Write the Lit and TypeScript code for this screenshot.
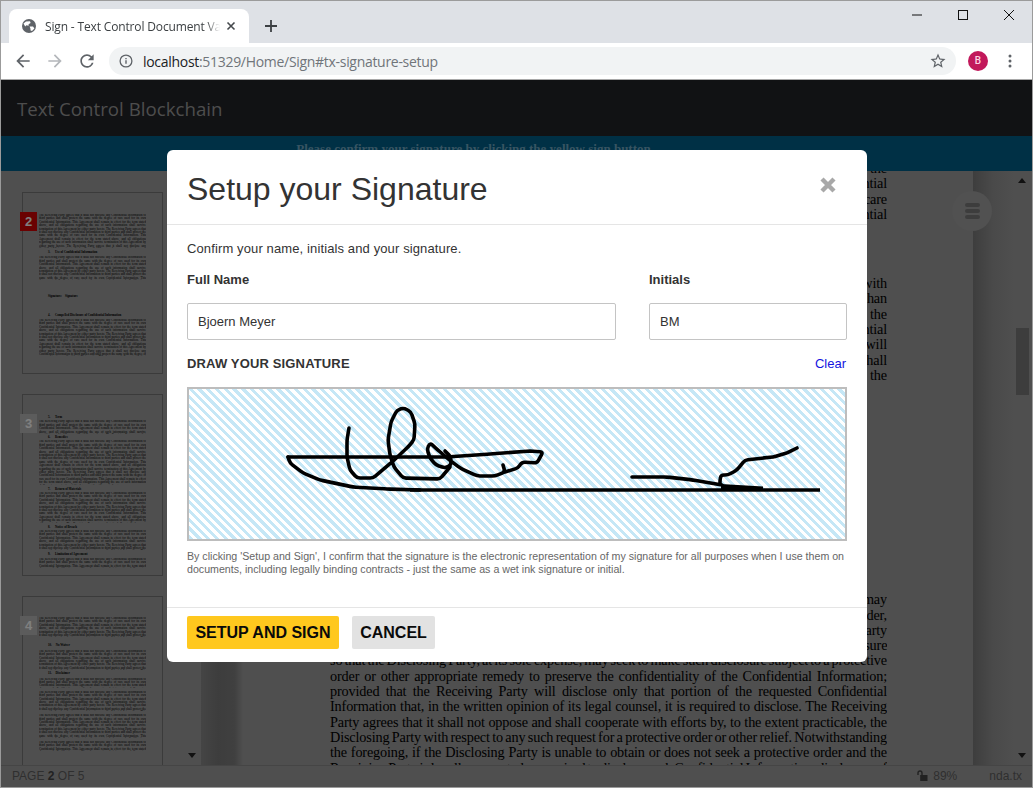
import { LitElement, html, css, svg } from 'lit';
import { customElement } from 'lit/decorators.js';

const NDA = 'The Receiving Party agrees that it shall not disclose any Confidential Information to third parties and shall protect the same with the degree of care used for its own Confidential Information. This Agreement shall remain in effect for the term stated above, and all obligations regarding the use of such information shall survive termination of this Agreement by either party hereto. ';
const FILL = NDA + NDA + NDA;

// top: offset from previous block, n: lines, h: heading
type Block = { top: number; n: number; h?: string };

const THUMBS: { num: number; active?: boolean; blocks: Block[] }[] = [
  {
    num: 2,
    active: true,
    blocks: [
      { top: 21, n: 10 },
      { top: 3, n: 1, h: '3.      Use of Confidential Information' },
      { top: 2, n: 7 },
      { top: 15, n: 1, h: 'Signature:    Signature' },
      { top: 15, n: 1, h: '4.      Compelled Disclosure of Confidential Information' },
      { top: 2, n: 11 },
    ],
  },
  {
    num: 3,
    blocks: [
      { top: 21, n: 1, h: '5.      Term' },
      { top: 1, n: 4 },
      { top: 2, n: 1, h: '6.      Remedies' },
      { top: 1, n: 13 },
      { top: 3, n: 1, h: '7.      Return of Materials' },
      { top: 1, n: 9 },
      { top: 3, n: 1, h: '8.      Notice of Breach' },
      { top: 1, n: 6 },
      { top: 3, n: 1, h: '9.      Limitation of Agreement' },
      { top: 1, n: 3 },
    ],
  },
  {
    num: 4,
    blocks: [
      { top: 20, n: 6 },
      { top: 7, n: 1, h: '10.     No Waiver' },
      { top: 2, n: 6 },
      { top: 2, n: 1, h: '11.     Disclaimer' },
      { top: 2, n: 3 },
      { top: 3, n: 6 },
      { top: 3, n: 7 },
      { top: 3, n: 3 },
    ],
  },
];

const DOC: string[][] = [
  [
    'and shall be used solely for the purposes of evaluating the proposed business relationship with the',
    'Disclosing Party, and the Receiving Party shall keep all of such information strictly Confidential',
    'and protect it from disclosure with the same degree of care as its own, using reasonable care',
    'to ensure that no person gains access to it other than those persons bound by these Confidential',
  ],
  [
    'The Receiving Party shall not use any Confidential Information in connection with',
    'any purpose other than the evaluation of the relationship between the parties, rather than',
    'for its own benefit. The parties acknowledge that all right and title in and to any of the',
    'information disclosed under this Agreement shall remain with the owner of the Confidential',
    'Information and nothing in this Agreement grants any license, and the Receiving Party will',
    'return all copies of such materials upon request. The obligations set out herein shall',
    'continue in force after the return of all such materials to the owner or the',
  ],
  [
    'Notwithstanding anything in the foregoing to the contrary, the Receiving Party may',
    'disclose Confidential Information pursuant to any governmental, judicial, or administrative order,',
    'subpoena, discovery request, regulatory request or similar method, provided that the Receiving Party',
    'promptly notifies, to the extent practicable, the Disclosing Party in writing of such demand for disclosure',
    'so that the Disclosing Party, at its sole expense, may seek to make such disclosure subject to a protective',
    'order or other appropriate remedy to preserve the confidentiality of the Confidential Information;',
    'provided that the Receiving Party will disclose only that portion of the requested Confidential',
    'Information that, in the written opinion of its legal counsel, it is required to disclose.  The Receiving',
    'Party agrees that it shall not oppose and shall cooperate with efforts by, to the extent practicable, the',
    'Disclosing Party with respect to any such request for a protective order or other relief.  Notwithstanding',
    'the foregoing, if the Disclosing Party is unable to obtain or does not seek a protective order and the',
    'Receiving Party is legally requested or required to disclose such Confidential Information, disclosure of',
  ],
];

// signature strokes, in page coordinates
const INK: number[][][] = [
  [[288, 457], [447, 457], [490, 454], [530, 451], [543, 452], [537, 463], [522, 462], [518, 468], [505, 472]],
  [[503, 465], [505, 472], [495, 476], [477, 476], [460, 468], [447, 458], [438, 450], [430, 443], [427, 449], [430, 458], [436, 465], [445, 468], [451, 465], [451, 457], [445, 451]],
  [[450, 467], [440, 479], [403, 478], [394, 467], [390, 455], [388, 440], [391, 422], [397, 410], [404, 408], [411, 412], [415, 424], [414, 440], [408, 447], [392, 462], [373, 478], [357, 478], [350, 470], [347, 457], [347, 440], [349, 428]],
  [[288, 457], [290, 463], [303, 473], [320, 480], [353, 487], [387, 489], [420, 490]],
  [[632, 477], [667, 477], [693, 480], [722, 485]],
  [[720, 484], [720, 480], [721, 475], [728, 475], [737, 470], [745, 460], [773, 457], [787, 453], [797, 448]],
];

// polyline with only its corners rounded off
function inkPath(pts: number[][]) {
  let d = `M${pts[0][0]} ${pts[0][1]}`;
  for (let i = 1; i < pts.length - 1; i++) {
    const [x, y] = pts[i];
    const [px, py] = pts[i - 1];
    const [nx, ny] = pts[i + 1];
    const a = Math.min(3 / Math.hypot(x - px, y - py), 0.5);
    const b = Math.min(3 / Math.hypot(nx - x, ny - y), 0.5);
    d += ` L${x + (px - x) * a} ${y + (py - y) * a} Q${x} ${y} ${x + (nx - x) * b} ${y + (ny - y) * b}`;
  }
  const last = pts[pts.length - 1];
  return d + ` L${last[0]} ${last[1]}`;
}

@customElement('app-root')
export class AppRoot extends LitElement {
  static styles = css`
    :host {
      display: block;
      width: 1033px;
      height: 788px;
      overflow: hidden;
      font-family: "Liberation Sans", Arial, sans-serif;
    }
    svg { display: block; }
    .window {
      box-sizing: border-box;
      width: 1033px;
      height: 788px;
      border: 1px solid #9b9b9b;
      display: flex;
      flex-direction: column;
      overflow: hidden;
    }

    /* browser chrome */
    .tabstrip {
      height: 42px;
      flex: none;
      background: #dee1e6;
      display: flex;
      align-items: flex-end;
      padding-left: 8px;
    }
    .tab {
      box-sizing: border-box;
      width: 240px;
      height: 34px;
      background: #fff;
      border-radius: 8px 8px 0 0;
      display: flex;
      align-items: center;
      padding: 0 0 0 12px;
      font: 12px "Open Sans", "Noto Sans", sans-serif;
      letter-spacing: -0.15px;
      color: #3c4043;
    }
    .tab-title {
      margin-left: 8px;
      width: 175px;
      white-space: nowrap;
      overflow: hidden;
      -webkit-mask-image: linear-gradient(90deg, #000 92%, transparent);
      mask-image: linear-gradient(90deg, #000 92%, transparent);
    }
    .tab-close { margin-left: 6px; }
    .new-tab { margin: 0 0 9px 14px; }
    .win-ctrls {
      margin-left: auto;
      align-self: flex-start;
      display: flex;
      gap: 30px;
      padding: 6px 15px 0 0;
    }
    .toolbar {
      height: 36px;
      flex: none;
      background: #fff;
      border-bottom: 1px solid #a8a8a8;
      display: flex;
      align-items: center;
      padding-left: 12px;
    }
    .nav-icons { display: flex; gap: 12px; }
    .omnibox {
      margin-left: 12px;
      width: 847px;
      height: 28px;
      border-radius: 14px;
      background: #f1f3f4;
      display: flex;
      align-items: center;
      padding-left: 9px;
      box-sizing: border-box;
      font: 14px "Open Sans", "Noto Sans", sans-serif;
      color: #70757a;
    }
    .omnibox b { font-weight: 400; color: #202124; }
    .url { margin-left: 9px; letter-spacing: -0.3px; }
    .star { margin-left: auto; margin-right: 9px; }
    .avatar {
      margin-left: 12px;
      width: 20px;
      height: 20px;
      border-radius: 50%;
      background: #c2185b;
      color: #fbd5e3;
      font: 500 10px/20px Roboto, sans-serif;
      text-align: center;
    }
    .dots { margin-left: 20px; }

    /* page behind the dialog */
    .page { position: relative; flex: 1; min-height: 0; display: flex; flex-direction: column; overflow: hidden; }
    .navbar {
      height: 56px;
      flex: none;
      background: #222428;
      color: #9a9a9a;
      font: 18.7px/58px "Open Sans", "Noto Sans", sans-serif;
      padding-left: 16px;
    }
    .banner {
      height: 35px;
      flex: none;
      background: #00608a;
      color: #6fa9c4;
      font: 700 13px/25px "Liberation Serif", serif;
      text-align: center;
      padding-right: 86px;
    }
    .viewer { height: 594px; flex: none; display: flex; background: #9e9e9e; overflow: hidden; }
    .thumbs {
      width: 161px;
      flex: none;
      padding: 21px 0 0 21px;
      display: flex;
      flex-direction: column;
      gap: 20px;
    }
    .thumb {
      position: relative;
      box-sizing: border-box;
      width: 141px;
      height: 182px;
      flex: none;
      border: 1px solid #767676;
      padding: 0 16px 0 16px;
      font-family: "Liberation Serif", serif;
      color: #000;
    }
    .badge {
      position: absolute;
      left: -3px;
      top: 19px;
      width: 17px;
      height: 19px;
      background: #b9b9b9;
      color: #fff;
      font: 700 13px/19px "Liberation Sans", sans-serif;
      text-align: center;
    }
    .badge.active { background: #d40505; }
    .tp {
      font-size: 3.1px;
      line-height: 3.4px;
      text-align: justify;
      overflow: hidden;
    }
    .th { font-size: 3.1px; line-height: 3.4px; font-weight: 700; white-space: pre; padding-left: 9px; }
    .arrows {
      width: 18px;
      flex: none;
      display: flex;
      flex-direction: column;
      justify-content: flex-end;
      align-items: center;
    }
    .tri-up, .tri-down { width: 0; height: 0; border-left: 4px solid transparent; border-right: 4px solid transparent; }
    .tri-up { border-bottom: 5px solid #222; margin-top: 7px; }
    .tri-down { border-top: 5px solid #222; margin-bottom: 7px; }
    .gutter { width: 42px; flex: none; background: linear-gradient(90deg, #8a8a8a, #7b7b7b 40%, #808080 80%, #9e9e9e); }
    .sheet {
      position: relative;
      width: 643px;
      flex: none;
      padding-left: 87px;
      font: 14.24px/15.3px "Liberation Serif", serif;
      color: #000;
    }
    .para { width: 557px; }
    .para:nth-child(1) { margin-top: -10px; }
    .para:nth-child(2) { margin-top: 54px; }
    .para:nth-child(3) { margin-top: 209px; }
    .ln {
      height: 15.3px;
      white-space: nowrap;
      overflow: hidden;
      letter-spacing: -0.15px;
      word-spacing: -1.7px;
      text-align: justify;
      text-align-last: justify;
    }
    .fab {
      position: absolute;
      right: -19px;
      top: 20px;
      width: 40px;
      height: 40px;
      border-radius: 50%;
      background: #a2a2a2;
      display: flex;
      flex-direction: column;
      justify-content: center;
      align-items: center;
      gap: 2px;
    }
    .fab i { display: block; width: 15px; height: 4px; border-radius: 2px; background: #7a7a7a; }
    .gutter-r { width: 40px; flex: none; background: linear-gradient(90deg, #7c7c7c, #949494 50%, #9e9e9e); }
    .vscroll {
      width: 18px;
      flex: none;
      display: flex;
      flex-direction: column;
      align-items: center;
    }
    .vthumb { width: 13px; height: 67px; margin-top: 145px; background: #7a7a7a; }
    .vscroll .tri-down { margin-top: auto; }
    .statusbar {
      flex: 1;
      border-top: 1px solid #8a8a8a;
      background: #9e9e9e;
      color: #5e5e5e;
      font-size: 12px;
      display: flex;
      align-items: center;
      padding: 0 10px 2px 11px;
    }
    .statusbar b { font-weight: 700; color: #444; }
    .zoom { margin-left: auto; display: flex; align-items: center; gap: 5px; }
    .fname { margin-left: 32px; }

    /* dialog */
    .backdrop { position: absolute; inset: 0; background: rgba(0, 0, 0, 0.5); }
    .modal {
      box-sizing: border-box;
      width: 700px;
      height: 512px;
      margin: 70px 0 0 166px;
      background: #fff;
      border-radius: 6px;
      display: flex;
      flex-direction: column;
      color: #333;
    }
    .m-head {
      height: 75px;
      flex: none;
      box-sizing: border-box;
      border-bottom: 1px solid #e5e5e5;
      display: flex;
      align-items: center;
      justify-content: space-between;
      padding: 4px 31px 0 20px;
    }
    .m-head h1 { margin: 0; font-size: 32px; font-weight: 400; color: #333; }
    .m-close { margin-bottom: 9px; }
    .m-body { flex: 1; padding: 16px 20px 0; font-size: 13px; }
    .intro { line-height: 16px; letter-spacing: 0.12px; color: #333; }
    .fields { display: grid; grid-template-columns: 429px 198px; column-gap: 33px; margin-top: 15px; }
    .fields label { font-weight: 700; line-height: 16px; }
    .field-input {
      box-sizing: border-box;
      height: 37px;
      margin-top: 15px;
      border: 1px solid #c4c4c4;
      border-radius: 2px;
      line-height: 35px;
      padding-left: 10px;
      color: #333;
    }
    .sig-head { display: flex; justify-content: space-between; margin-top: 16px; line-height: 16px; }
    .sig-head span { font-weight: 700; letter-spacing: 0.15px; }
    .sig-head a { color: #1414e0; padding-right: 1px; }
    .canvas {
      box-sizing: border-box;
      height: 154px;
      margin-top: 15px;
      border: 2px solid #bdbdbd;
      background: repeating-linear-gradient(45deg, #c5e7f6 0, #c5e7f6 3.1px, #fff 3.1px, #fff 6.2px);
    }
    .legal { margin: 9px 0 0; font-size: 10.65px; line-height: 13px; color: #666; }
    .m-foot {
      height: 55px;
      flex: none;
      box-sizing: border-box;
      border-top: 1px solid #e5e5e5;
      display: flex;
      gap: 13px;
      padding: 8px 20px 0;
    }
    .btn {
      height: 33px;
      border-radius: 2px;
      font: 700 16px/33px "Liberation Sans", sans-serif;
      color: #0a0a0a;
      text-align: center;
    }
    .btn.primary { width: 152px; background: #ffc81e; }
    .btn.plain { width: 83px; background: #e2e2e2; }
  `;

  private globe() {
    return html`<svg width="16" height="16" viewBox="0 0 16 16">
      <circle cx="8" cy="8" r="7" fill="#5f6368" />
      <path fill="#fff" d="M2.5 5.5 5 3.5 9 3.2 9.6 5 7.6 6.2 7.6 7.8 5.4 7.2 4.2 8.6zM8.6 8.4 12 8.6 13.4 10.6 11 13 9.6 12.6 9.4 10.4z" />
    </svg>`;
  }

  private thumb(t: (typeof THUMBS)[number]) {
    return html`<div class="thumb">
      <div class="badge ${t.active ? 'active' : ''}">${t.num}</div>
      ${t.blocks.map((b) =>
        b.h
          ? html`<div class="th" style="margin-top:${b.top}px">${b.h}</div>`
          : html`<div class="tp" style="margin-top:${b.top}px;height:${b.n * 3.4}px">${FILL}</div>`
      )}
    </div>`;
  }

  render() {
    return html`<div class="window">
      <div class="tabstrip">
        <div class="tab">
          ${this.globe()}
          <span class="tab-title">Sign - Text Control Document Validation</span>
          <svg class="tab-close" width="10" height="10" viewBox="0 0 10 10"><path d="M1.5 1.5l7 7M8.5 1.5l-7 7" stroke="#45494d" stroke-width="1.6" /></svg>
        </div>
        <svg class="new-tab" width="16" height="16" viewBox="0 0 16 16"><path d="M8 2v12M2 8h12" stroke="#3c4043" stroke-width="1.8" /></svg>
        <div class="win-ctrls">
          <svg width="16" height="16" viewBox="0 0 16 16"><path d="M3 8h10" stroke="#111" /></svg>
          <svg width="16" height="16" viewBox="0 0 16 16"><rect x="3.5" y="3.5" width="9" height="9" fill="none" stroke="#111" /></svg>
          <svg width="16" height="16" viewBox="0 0 16 16"><path d="M3 3l10 10M13 3L3 13" stroke="#111" /></svg>
        </div>
      </div>
      <div class="toolbar">
        <div class="nav-icons">
          <svg width="20" height="20" viewBox="0 0 24 24"><path fill="#5f6368" d="M20 11H7.83l5.59-5.59L12 4l-8 8 8 8 1.41-1.41L7.83 13H20v-2z" /></svg>
          <svg width="20" height="20" viewBox="0 0 24 24"><path fill="#b4b7bb" d="M12 4l-1.41 1.41L16.17 11H4v2h12.17l-5.58 5.59L12 20l8-8z" /></svg>
          <svg width="20" height="20" viewBox="0 0 24 24"><path fill="#5f6368" d="M17.65 6.35A7.958 7.958 0 0 0 12 4c-4.42 0-7.99 3.58-7.99 8s3.57 8 7.99 8c3.73 0 6.84-2.55 7.73-6h-2.08A5.99 5.99 0 0 1 12 18c-3.31 0-6-2.69-6-6s2.69-6 6-6c1.66 0 3.14.69 4.22 1.78L13 11h7V4l-2.35 2.35z" /></svg>
        </div>
        <div class="omnibox">
          <svg width="16" height="16" viewBox="0 0 16 16">
            <circle cx="8" cy="8" r="5.9" fill="none" stroke="#5f6368" stroke-width="1.3" />
            <path d="M8 7.2v3.6M8 5v1.3" stroke="#5f6368" stroke-width="1.4" />
          </svg>
          <span class="url"><b>localhost</b>:51329/Home/Sign#tx-signature-setup</span>
          <svg class="star" width="18" height="18" viewBox="0 0 24 24"><path fill="#5f6368" d="M22 9.24l-7.19-.62L12 2 9.19 8.63 2 9.24l5.46 4.73L5.82 21 12 17.27 18.18 21l-1.63-7.03L22 9.24zM12 15.4l-3.76 2.27 1-4.28-3.32-2.88 4.38-.38L12 6.1l1.71 4.04 4.38.38-3.32 2.88 1 4.28L12 15.4z" /></svg>
        </div>
        <div class="avatar">B</div>
        <svg class="dots" width="4" height="14" viewBox="0 0 4 14"><circle cx="2" cy="2" r="1.5" fill="#5f6368" /><circle cx="2" cy="7" r="1.5" fill="#5f6368" /><circle cx="2" cy="12" r="1.5" fill="#5f6368" /></svg>
      </div>

      <div class="page">
        <div class="navbar">Text Control Blockchain</div>
        <div class="banner">Please confirm your signature by clicking the yellow sign button</div>
        <div class="viewer">
          <div class="thumbs">${THUMBS.map((t) => this.thumb(t))}</div>
          <div class="arrows"><div class="tri-down"></div></div>
          <div class="gutter"></div>
          <div class="sheet">
            ${DOC.map((p) => html`<div class="para">${p.map((l) => html`<div class="ln">${l}</div>`)}</div>`)}
            <div class="fab"><i></i><i></i><i></i></div>
          </div>
          <div class="gutter-r"></div>
          <div class="vscroll">
            <div class="tri-up"></div>
            <div class="vthumb"></div>
            <div class="tri-down"></div>
          </div>
        </div>
        <div class="statusbar">
          <span>PAGE <b>2</b> OF 5</span>
          <span class="zoom">
            <svg width="11" height="11" viewBox="0 0 11 11">
              <path d="M1 5V3a2 2 0 0 1 4 0v2" fill="none" stroke="#444" stroke-width="1.4" />
              <rect x="3.2" y="5" width="7.3" height="6" fill="#444" />
            </svg>
            89%
          </span>
          <span class="fname">nda.tx</span>
        </div>

        <div class="backdrop">
          <div class="modal">
            <div class="m-head">
              <h1>Setup your Signature</h1>
              <svg class="m-close" width="16" height="16" viewBox="0 0 16 16"><path d="M2 2l12 12M14 2L2 14" stroke="#a8a8a8" stroke-width="4.4" /></svg>
            </div>
            <div class="m-body">
              <div class="intro">Confirm your name, initials and your signature.</div>
              <div class="fields">
                <label>Full Name</label>
                <label>Initials</label>
                <div class="field-input">Bjoern Meyer</div>
                <div class="field-input">BM</div>
              </div>
              <div class="sig-head"><span>DRAW YOUR SIGNATURE</span><a>Clear</a></div>
              <div class="canvas">
                <svg width="656" height="150" viewBox="189 389 656 150" fill="none" stroke="#000" stroke-width="3.6" stroke-linejoin="round" stroke-linecap="round">
                  ${INK.map((p) => svg`<path d=${inkPath(p)} />`)}
                  <path d="M410 490H820" stroke-linecap="butt" />
                  <path d="M721 484 L763 486.5 L763 490 L721 490z" fill="#000" stroke="none" />
                </svg>
              </div>
              <p class="legal">By clicking 'Setup and Sign', I confirm that the signature is the electronic representation of my signature for all purposes when I use them on documents, including legally binding contracts - just the same as a wet ink signature or initial.</p>
            </div>
            <div class="m-foot">
              <div class="btn primary">SETUP AND SIGN</div>
              <div class="btn plain">CANCEL</div>
            </div>
          </div>
        </div>
      </div>
    </div>`;
  }
}
